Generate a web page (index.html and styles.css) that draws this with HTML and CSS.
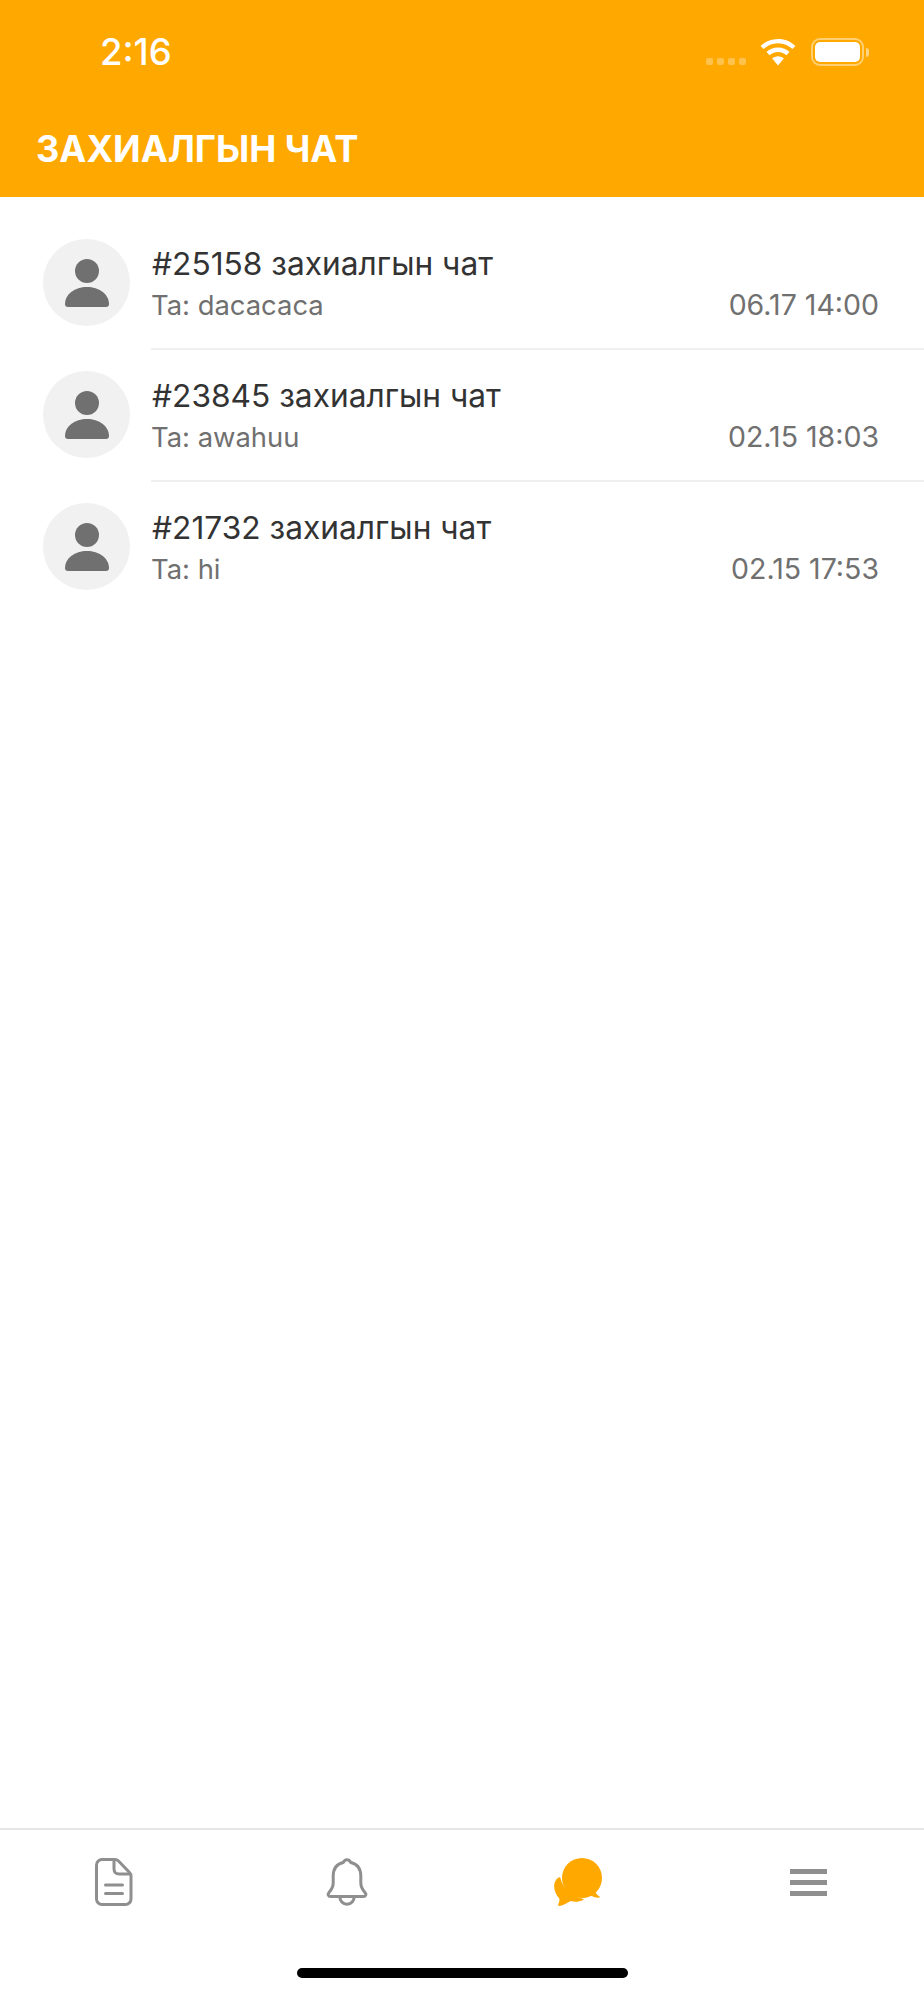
FILE: index.html
```html
<!DOCTYPE html>
<html lang="mn">
<head>
<meta charset="utf-8">
<title>Захиалгын чат</title>
<link rel="stylesheet" href="styles.css">
</head>
<body>
<div class="app">
  <header class="header">
    <div class="status">
      <span class="time">2:16</span>
      <div class="status-icons">
        <div class="signal"><i></i><i></i><i></i><i></i></div>
        <svg class="wifi" width="36" height="27" viewBox="0 0 36 27"><path d="M18 0C11 0 5.200 2.600 .600 7l2.900 3.100C7.300 6.400 12.300 4.200 18 4.200s10.700 2.200 14.500 5.900L35.400 7C30.800 2.600 25 0 18 0z" fill="#fff"/><path d="M18 8.600c-4.500 0-8.500 1.700-11.500 4.500l3 3.100c2.200-2 5.100-3.300 8.500-3.300s6.300 1.300 8.500 3.300l3-3.100c-3-2.800-7-4.500-11.500-4.500z" fill="#fff"/><path d="M18 17.300c-2.300 0-4.300.9-5.800 2.300L18 26.500l5.800-6.900c-1.500-1.400-3.500-2.300-5.800-2.300z" fill="#fff"/></svg>
        <div class="battery"><div class="battery-shell"><div class="battery-fill"></div></div><div class="battery-nub"></div></div>
      </div>
    </div>
    <h1 class="title">ЗАХИАЛГЫН ЧАТ</h1>
  </header>

  <main class="list">
    <article class="row">
      <div class="avatar"><svg width="44" height="48" viewBox="0 0 44 48"><circle cx="22" cy="12" r="12" fill="#707070"/><path d="M0 45C0 35 10 28 22 28s22 7 22 17c0 2-1 3-3 3H3c-2 0-3-1-3-3z" fill="#707070"/></svg></div>
      <div class="body">
        <div class="name">#25158 захиалгын чат</div>
        <div class="meta"><span>Та: dacacaca</span><span class="date">06.17 14:00</span></div>
      </div>
    </article>
    <article class="row">
      <div class="avatar"><svg width="44" height="48" viewBox="0 0 44 48"><circle cx="22" cy="12" r="12" fill="#707070"/><path d="M0 45C0 35 10 28 22 28s22 7 22 17c0 2-1 3-3 3H3c-2 0-3-1-3-3z" fill="#707070"/></svg></div>
      <div class="body">
        <div class="name">#23845 захиалгын чат</div>
        <div class="meta"><span>Та: awahuu</span><span class="date">02.15 18:03</span></div>
      </div>
    </article>
    <article class="row row-last">
      <div class="avatar"><svg width="44" height="48" viewBox="0 0 44 48"><circle cx="22" cy="12" r="12" fill="#707070"/><path d="M0 45C0 35 10 28 22 28s22 7 22 17c0 2-1 3-3 3H3c-2 0-3-1-3-3z" fill="#707070"/></svg></div>
      <div class="body">
        <div class="name">#21732 захиалгын чат</div>
        <div class="meta"><span>Та: hi</span><span class="date">02.15 17:53</span></div>
      </div>
    </article>
  </main>

  <nav class="tabs">
    <div class="tab tab-doc"><svg width="38" height="48" viewBox="0 0 38 48" fill="none" stroke="#8f8f8f" stroke-width="3" stroke-linejoin="round" stroke-linecap="round"><path d="M7 1.500h13c1.500 0 2.500.5 3.500 1.500l11 11.500c1 1 1.500 2 1.500 3.500V41c0 3-2.500 5.500-5.500 5.500H7c-3 0-5.500-2.500-5.500-5.500V7C1.500 4 4 1.500 7 1.500z"/><path d="M19 2v9c0 3 2 5 5 5h11"/><path d="M10.500 27h17M10.500 35.500h17"/></svg></div>
    <div class="tab"><svg width="42" height="48" viewBox="0 0 42 48" fill="none" stroke="#8f8f8f" stroke-width="3" stroke-linejoin="round"><path d="M21 1.800c2 0 3 1.200 3.800 2.700C31 6 34.800 11 34.800 18v7c0 4 1.500 6.500 4.200 9.500 1.500 1.800.7 4-1.500 4h-33c-2.200 0-3-2.200-1.500-4 2.700-3 4.200-5.500 4.200-9.500v-7c0-7 3.800-12 10-13.500C18 3 19 1.800 21 1.800z"/><path d="M13.800 38.500c0 4.500 3 7.800 7.200 7.800s7.200-3.300 7.200-7.800"/></svg></div>
    <div class="tab"><svg width="48" height="48" viewBox="0 0 48 48"><circle cx="28" cy="20" r="20" fill="#ffa800"/><path d="M41 33c.8 2.500 2.500 4.300 4.300 5.300.8.600.3 1.600-.6 1.500-3.500-.3-7-1.500-9.700-3.300z" fill="#ffa800"/><path d="M4.500 19.500c1-.5 1.700-.1 2 .8C9 31 18 39 29 40.800c.7.100.8.800.2 1.100-4 2-8.500 2.300-12.500 1.100-3.500 1.900-7.500 4.300-11 4.900-1.300.2-2-.8-1.400-1.900.9-1.600 1.400-3.500 1-5.500C2 37 .1 32 .1 28c0-3.300 1.700-6.700 4.400-8.500z" fill="#ffa800"/></svg></div>
    <div class="tab"><div class="menu"><i></i><i></i><i></i></div></div>
  </nav>
  <div class="home-area"><div class="home-bar"></div></div>
</div>
</body>
</html>
```
FILE: styles.css
```css
* { box-sizing: border-box; }
html, body { margin: 0; padding: 0; background: #fff; }
body { font-family: Inter, "Noto Sans", sans-serif; }
.app { width: 924px; height: 2000px; display: flex; flex-direction: column; }

.header { height: 197px; flex: none; background: #ffa800; color: #fff; display: flex; flex-direction: column; }
.status { height: 127px; flex: none; padding: 32px 55px 0 100px; display: flex; justify-content: space-between; align-items: flex-start; }
.time { font-size: 36.500px; line-height: 40px; font-weight: 500; letter-spacing: 0; }
.status-icons { display: flex; align-items: flex-start; padding-top: 6px; }
.signal { display: flex; gap: 4px; margin: 20px 14px 0 0; }
.signal i { width: 7px; height: 7px; border-radius: 2px; background: rgba(255,255,255,.3); }
.wifi { display: block; margin: 1px 15px 0 0; }
.battery { display: flex; align-items: center; }
.battery-shell { width: 53px; height: 28px; border: 2px solid rgba(255,255,255,.45); border-radius: 9px; padding: 2px; }
.battery-fill { width: 100%; height: 100%; background: #fff; border-radius: 5px; }
.battery-nub { width: 3px; height: 9px; margin-left: 2px; background: rgba(255,255,255,.5); border-radius: 0 3px 3px 0; }
.title { margin: 0; padding-left: 36px; font-size: 36.200px; line-height: 44px; font-weight: 700; letter-spacing: 0; }

.list { flex: 1; padding-top: 21px; }
.row { height: 132px; padding-left: 43px; display: flex; align-items: stretch; }
.avatar { width: 87px; height: 87px; margin-top: 21px; flex: none; border-radius: 50%; background: #f1f1f1; display: flex; align-items: center; justify-content: center; }
.body { flex: 1; margin-left: 21px; padding: 27px 45px 0 0; border-bottom: 2px solid #f0f0f0; }
.row-last .body { border-bottom: 0; }
.name { padding-left: 1px; font-size: 31.700px; line-height: 38px; color: #333; }
.meta { margin-top: 4px; display: flex; justify-content: space-between; font-size: 27.400px; line-height: 36px; color: #707070; }
.date { font-size: 28.500px; }

.tabs { height: 102px; flex: none; border-top: 2px solid #e6e6e6; display: grid; grid-template-columns: repeat(4, 1fr); padding-top: 28px; align-items: start; justify-items: center; }
.tab { height: 48px; display: flex; align-items: center; }
.tab-doc { margin-right: 3px; }
.menu { width: 37px; display: flex; flex-direction: column; gap: 6px; }
.menu i { height: 5px; background: #8f8f8f; }
.home-area { height: 70px; flex: none; padding-top: 38px; display: flex; justify-content: center; }
.home-bar { width: 331px; height: 10px; border-radius: 5px; background: #000; }
```
